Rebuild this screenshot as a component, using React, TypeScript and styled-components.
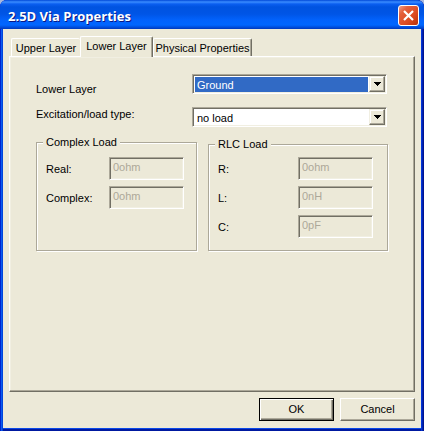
import React, { useState } from "react";
import styled, { createGlobalStyle, css } from "styled-components";

const face = "#ece9d8";
const shade = "#aca899";
const dark = "#716f64";
const light = "#f1efe2";

const Global = createGlobalStyle`
  * { box-sizing: border-box; }
  body { margin: 0; background: #a9b8dc; }
  body, button, input, select {
    font: 11px/14px "Liberation Sans", Arial, sans-serif;
    color: #000;
  }
`;

const Dialog = styled.main`
  display: flex;
  flex-direction: column;
  min-height: 100vh;
  padding: 0 3px 3px;
  border-radius: 7px 7px 0 0;
  background: ${face};
  box-shadow: inset 1px 0 #0023cc, inset 2px 0 #0a5cf0, inset 3px 0 #0144dc,
    inset -1px 0 #001590, inset -2px 0 #0023b4, inset -3px 0 #0036d8,
    inset 0 -2px #0019a0, inset 0 -3px #0a48e8;
`;

const TitleBar = styled.header`
  display: flex;
  align-items: center;
  justify-content: space-between;
  height: 29px;
  margin: 0 -3px;
  padding: 2px 5px 0 8px;
  border-radius: 7px 7px 0 0;
  background: linear-gradient(
    #0048d8 0, #3a8cff 2px, #0a5ef0 4px, #0053e0 7px, #0055e6 14px,
    #0262fc 20px, #0066ff 25px, #0050e0 27px, #0038bc 29px
  );
`;

const Title = styled.h1`
  margin: 0;
  font: bold 13px/18px "Open Sans", sans-serif;
  color: #fff;
  text-shadow: 1px 1px #0a1883;
`;

const CloseButton = styled.button`
  display: grid;
  place-items: center;
  width: 21px;
  height: 21px;
  padding: 0;
  border: 1px solid #fff;
  border-radius: 3px;
  background: linear-gradient(135deg, #f0a088 0, #e4603c 25%, #dc4a20 65%, #b83008 100%);
`;

const Body = styled.div`
  flex: 1;
  display: flex;
  flex-direction: column;
  padding: 7px 6px;
`;

const TabList = styled.div`
  display: flex;
  align-items: flex-end;
  height: 20px;
  padding-left: 2px;
`;

const Tab = styled.button<{ $width: number }>`
  flex: 0 0 ${(p) => p.$width}px;
  height: 18px;
  padding: 1px 0 0;
  border: 1px solid #fff;
  border-right-color: ${dark};
  border-bottom: 0;
  border-radius: 2px 2px 0 0;
  background: ${face};
  white-space: nowrap;
  box-shadow: inset -1px 0 ${shade};
  &:first-child {
    border-right: 0;
    box-shadow: none;
  }
  &[aria-selected="true"] {
    position: relative;
    height: 21px;
    margin-bottom: -1px;
    padding-bottom: 3px;
  }
`;

const Pane = styled.section`
  flex: 1;
  padding: 17px 26px;
  border: 1px solid;
  border-color: #fff ${dark} ${dark} #fff;
  box-shadow: inset -1px -1px ${shade}, inset 1px 1px ${light};
`;

const Fields = styled.div`
  display: grid;
  gap: 13px;
  padding-right: 1px;
`;

const Field = styled.div`
  display: grid;
  grid-template-columns: 156px 1fr;
  align-items: start;
  height: 20px;
`;

const FieldLabel = styled.label<{ $drop: number }>`
  padding-top: ${(p) => p.$drop}px;
`;

const sunken = css`
  border: 1px solid;
  border-color: ${shade} #fff #fff ${shade};
  box-shadow: inset 1px 1px ${dark}, inset -1px -1px ${light};
`;

const SelectFrame = styled.div`
  display: flex;
  height: 20px;
  padding: 1px;
  background: #fff;
  ${sunken}
`;

const Select = styled.select<{ $active?: boolean }>`
  appearance: none;
  flex: 1;
  min-width: 0;
  margin: 1px 1px 0;
  padding: 0 2px;
  border: 0;
  outline: 0;
  background: ${(p) => (p.$active ? "#316ac5" : "#fff")};
  color: ${(p) => (p.$active ? "#fff" : "#000")};
`;

const Arrow = styled.span`
  display: grid;
  place-items: center;
  width: 16px;
  border: 1px solid;
  border-color: ${light} ${dark} ${dark} ${light};
  background: ${face};
  box-shadow: inset -1px -1px ${shade}, inset 1px 1px #fff;
  pointer-events: none;
`;

const Groups = styled.div`
  display: grid;
  grid-template-columns: 161fr 180fr;
  gap: 11px;
  padding-top: 8px;
`;

const Group = styled.fieldset<{ $top: number; $side: number }>`
  display: flex;
  flex-direction: column;
  gap: 6px;
  min-width: 0;
  height: ${(p) => 116 - p.$top}px;
  margin: ${(p) => p.$top}px 0 0;
  padding: ${(p) => 8 - p.$top}px ${(p) => p.$side}px 0 9px;
  border: 1px solid ${shade};
  box-shadow: 1px 1px #fff, inset 1px 1px #fff;
`;

const Legend = styled.legend`
  margin-left: -3px;
  padding: 0 3px;
  background: ${face};
`;

const ValueRow = styled.div`
  display: flex;
  align-items: center;
  justify-content: space-between;
`;

const ValueInput = styled.input`
  width: 75px;
  height: 23px;
  padding: 0 3px 3px;
  border-radius: 0;
  background: ${face};
  color: ${shade};
  ${sunken}
`;

const Actions = styled.footer`
  display: flex;
  justify-content: flex-end;
  gap: 6px;
  padding-top: 6px;
`;

const ActionButton = styled.button<{ $default?: boolean }>`
  width: 75px;
  height: 23px;
  padding: 0 0 1px;
  background: ${face};
  border: 1px solid;
  ${(p) =>
    p.$default
      ? css`
          border-color: #000;
          box-shadow: inset 1px 1px #fff, inset -1px -1px ${dark}, inset -2px -2px ${shade};
        `
      : css`
          border-color: #fff ${dark} ${dark} #fff;
          box-shadow: inset -1px -1px ${shade};
        `}
`;

const tabs = [
  { name: "Upper Layer", width: 69 },
  { name: "Lower Layer", width: 73 },
  { name: "Physical Properties", width: 99 },
];

function Choice({ id, options, active }: { id: string; options: string[]; active?: boolean }) {
  return (
    <SelectFrame>
      <Select id={id} $active={active}>
        {options.map((o) => <option key={o}>{o}</option>)}
      </Select>
      <Arrow>
        <svg width="7" height="4" viewBox="0 0 7 4" shapeRendering="crispEdges" aria-hidden="true">
          <path d="M0 0h7v1H6v1H5v1H4v1H3V3H2V2H1V1H0z" />
        </svg>
      </Arrow>
    </SelectFrame>
  );
}

function Value({ id, label, value }: { id: string; label: string; value: string }) {
  return (
    <ValueRow>
      <label htmlFor={id}>{label}</label>
      <ValueInput id={id} defaultValue={value} disabled />
    </ValueRow>
  );
}

export default function App() {
  const [tab, setTab] = useState("Lower Layer");
  return (
    <>
      <Global />
      <Dialog>
        <TitleBar>
          <Title>2.5D Via Properties</Title>
          <CloseButton aria-label="Close">
            <svg width="13" height="13" viewBox="0 0 13 13" aria-hidden="true">
              <path d="M2 2l9 9M11 2l-9 9" stroke="#fff" strokeWidth="2.2" />
            </svg>
          </CloseButton>
        </TitleBar>
        <Body>
          <TabList role="tablist">
            {tabs.map((t) => (
              <Tab key={t.name} role="tab" $width={t.width} aria-selected={tab === t.name} onClick={() => setTab(t.name)}>
                {t.name}
              </Tab>
            ))}
          </TabList>
          <Pane role="tabpanel">
            <Fields>
              <Field>
                <FieldLabel htmlFor="layer" $drop={8}>Lower Layer</FieldLabel>
                <Choice id="layer" options={["Ground"]} active />
              </Field>
              <Field>
                <FieldLabel htmlFor="type" $drop={0}>Excitation/load type:</FieldLabel>
                <Choice id="type" options={["no load"]} />
              </Field>
            </Fields>
            <Groups>
              <Group $top={0} $side={12}>
                <Legend>Complex Load</Legend>
                <Value id="real" label="Real:" value="0ohm" />
                <Value id="complex" label="Complex:" value="0ohm" />
              </Group>
              <Group $top={2} $side={14}>
                <Legend>RLC Load</Legend>
                <Value id="r" label="R:" value="0ohm" />
                <Value id="l" label="L:" value="0nH" />
                <Value id="c" label="C:" value="0pF" />
              </Group>
            </Groups>
          </Pane>
          <Actions>
            <ActionButton $default>OK</ActionButton>
            <ActionButton>Cancel</ActionButton>
          </Actions>
        </Body>
      </Dialog>
    </>
  );
}
